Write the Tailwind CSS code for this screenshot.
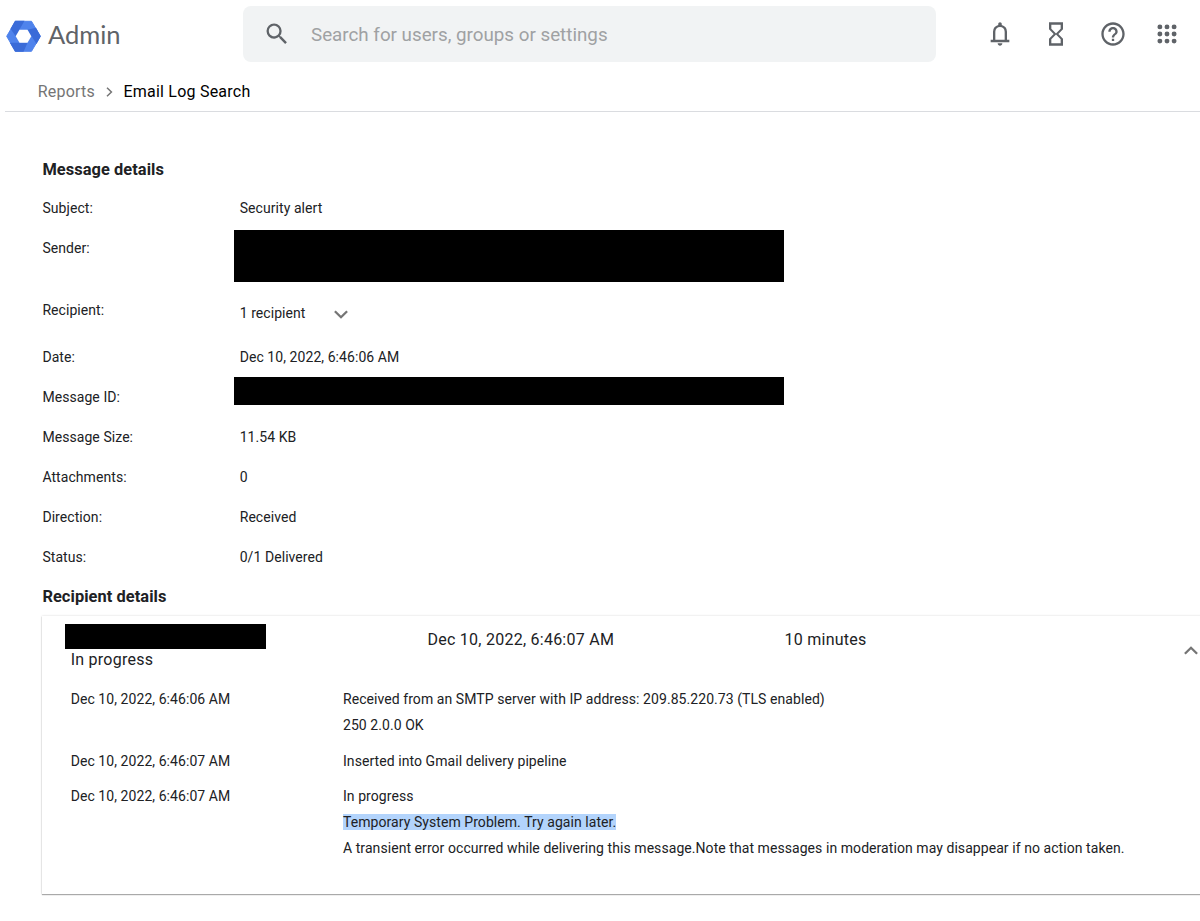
<!DOCTYPE html>
<html lang="en">
<head>
    <meta charset="UTF-8">
    <title>Email Log Search - Admin</title>
    <script src="https://cdn.jsdelivr.net/npm/@tailwindcss/browser@4"></script>
</head>
<body class="bg-white font-[Roboto,sans-serif] text-[#202124] overflow-hidden h-[921px]">
    <header class="flex items-start h-[68px] pl-1.5 pt-1.5">
        <div class="flex items-start w-[237px] pt-2.5">
            <svg class="w-[35px] h-[40px]" viewBox="0 0 35 40" fill="none">
                <path fill="#4f83ec" stroke="#4f83ec" stroke-linejoin="round" d="M9.500 5.300h16L34.300 20.300l-8.800 15h-16L.7 20.300z"/>
                <path fill="#3a6bd8" d="M9 4.800h9.500L9.700 20.300 4.500 12.800zM34.800 20.300l-4.300 7.700-9-14.200 8.500-2zM9 35.800 3.800 26.800h17.700l-4 9z"/>
                <path fill="#fff" d="M13.500 13.800h8L25.300 20.300l-3.800 6.500h-8L9.700 20.300z"/>
            </svg>
            <span class="ml-[7px] font-[Lato,sans-serif] text-[25.500px] leading-[36px] text-[#5f6368]">Admin</span>
        </div>
        <div class="flex items-center w-[693px] h-14 rounded-lg bg-[#f1f3f4] pl-5">
            <svg class="w-7 h-7" viewBox="0 0 24 24" fill="#5f6368"><path d="M15.500 14h-.79l-.28-.27A6.471 6.471 0 0 0 16 9.500 6.500 6.500 0 1 0 9.500 16c1.610 0 3.090-.59 4.230-1.570l.27.28v.79l5 4.990L20.490 19l-4.990-5zm-6 0C7.010 14 5 11.990 5 9.500S7.010 5 9.500 5 14 7.010 14 9.500 11.990 14 9.500 14z"/></svg>
            <span class="ml-5 pt-0.5 text-[18.800px] text-[#9fa1a3]">Search for users, groups or settings</span>
        </div>
        <div class="flex items-center h-14 pl-[49.500px] gap-[28.500px]">
            <svg class="w-7 h-7" viewBox="0 0 24 24" fill="#5f6368"><path d="M4 19v-2h2v-7q0-2.075 1.250-3.687Q8.500 4.700 10.500 4.200v-.7q0-.625.438-1.062Q11.375 2 12 2t1.062.438q.438.437.438 1.062v.7q2 .5 3.250 2.113Q18 7.925 18 10v7h2v2Zm8 3q-.825 0-1.412-.587Q10 20.825 10 20h4q0 .825-.588 1.413Q12.825 22 12 22Zm-4-5h8v-7q0-1.650-1.175-2.825Q13.650 6 12 6q-1.650 0-2.825 1.175Q8 8.350 8 10Z"/></svg>
            <svg class="w-7 h-7" viewBox="0 0 24 24" fill="#5f6368"><path d="M6 2v6h.01L6 8.010 10 12l-4 4 .01.01H6V22h12v-5.990h-.01L18 16l-4-4 4-3.990-.01-.01H18V2H6zm10 14.500V20H8v-3.500l4-4 4 4zm-4-5l-4-4V4h8v3.500l-4 4z"/></svg>
            <svg class="w-7 h-7" viewBox="0 0 24 24" fill="#5f6368"><path d="M11 18h2v-2h-2v2zm1-16C6.480 2 2 6.480 2 12s4.480 10 10 10 10-4.480 10-10S17.520 2 12 2zm0 18c-4.410 0-8-3.590-8-8s3.590-8 8-8 8 3.590 8 8-3.590 8-8 8zm0-14c-2.210 0-4 1.790-4 4h2c0-1.100.9-2 2-2s2 .9 2 2c0 2-3 1.750-3 5h2c0-2.250 3-2.500 3-5 0-2.210-1.790-4-4-4z"/></svg>
            <svg class="w-7 h-7 -ml-0.5" viewBox="0 0 24 24" fill="#5f6368">
                <circle cx="5.900" cy="5.900" r="2.100"/><circle cx="12" cy="5.900" r="2.100"/><circle cx="18.100" cy="5.900" r="2.100"/>
                <circle cx="5.900" cy="12" r="2.100"/><circle cx="12" cy="12" r="2.100"/><circle cx="18.100" cy="12" r="2.100"/>
                <circle cx="5.900" cy="18.100" r="2.100"/><circle cx="12" cy="18.100" r="2.100"/><circle cx="18.100" cy="18.100" r="2.100"/>
            </svg>
        </div>
    </header>

    <nav class="flex items-center h-11 ml-[5px] pl-[32.800px] pt-1 border-b border-[#dadce0] text-base">
        <span class="text-[#757575] tracking-[0.2px]">Reports</span>
        <svg class="w-[7px] h-[10px] ml-[11px] mr-[10.500px]" viewBox="0 0 7 10" fill="none" stroke="#757575" stroke-width="1.500"><path d="M1 .8 5.400 5 1 9.200"/></svg>
        <span class="text-black tracking-[0.220px]">Email Log Search</span>
    </nav>

    <main class="pl-[42px] text-sm tracking-[0.065px]">
        <h2 class="pt-[46px] pl-[0.400px] h-[76px] text-[16.400px] leading-6 font-bold">Message details</h2>
        <dl class="grid grid-cols-[192px_1fr] leading-5">
            <dt class="h-10 pt-2.5 pl-[0.400px]">Subject:</dt>
            <dd class="pt-2.5 pl-[5.700px]">Security alert</dd>
            <dt class="h-[61px] pt-2.5 pl-[0.400px]">Sender:</dt>
            <dd class="pt-0.5"><div class="w-[549.500px] h-[52px] bg-black"></div></dd>
            <dt class="h-12 pt-[11px] pl-[0.400px]">Recipient:</dt>
            <dd class="flex pt-3.5 pl-[5.700px]">1 recipient
                <svg class="w-[14px] h-[9px] ml-[28.500px] mt-[7px]" viewBox="0 0 14 9" fill="none" stroke="#757575" stroke-width="2.300"><path d="M.9 1.200 7 7.200l6.100-6"/></svg>
            </dd>
            <dt class="h-10 pt-2.5 pl-[0.400px]">Date:</dt>
            <dd class="pt-2.5 pl-[5.700px]">Dec 10, 2022, 6:46:06 AM</dd>
            <dt class="h-10 pt-2.5 pl-[0.400px]">Message ID:</dt>
            <dd><div class="w-[549.500px] h-[28px] bg-black"></div></dd>
            <dt class="h-10 pt-2.5 pl-[0.400px]">Message Size:</dt>
            <dd class="pt-2.5 pl-[5.700px]">11.54 KB</dd>
            <dt class="h-10 pt-2.5 pl-[0.400px]">Attachments:</dt>
            <dd class="pt-2.5 pl-[5.700px]">0</dd>
            <dt class="h-10 pt-2.5 pl-[0.400px]">Direction:</dt>
            <dd class="pt-2.5 pl-[5.700px]">Received</dd>
            <dt class="h-10 pt-2.5 pl-[0.400px]">Status:</dt>
            <dd class="pt-2.5 pl-[5.700px]">0/1 Delivered</dd>
        </dl>

        <h2 class="pt-2 pl-[0.400px] h-[39px] text-[16.400px] leading-6 font-bold">Recipient details</h2>
        <section class="h-[278px] -mr-2 pt-2 shadow-[0_1px_1px_rgba(0,0,0,0.300),0_0_2px_rgba(0,0,0,0.160)]">
            <div class="flex text-base leading-5 tracking-[0.250px]">
                <div class="w-[385.500px] pl-[23px]">
                    <div class="w-[201px] h-[25px] bg-black"></div>
                    <p class="pl-[5.700px] pt-px -mb-px">In progress</p>
                </div>
                <p class="w-[357px] pt-[6px]">Dec 10, 2022, 6:46:07 AM</p>
                <p class="w-[399px] pt-[6px]">10 minutes</p>
                <svg class="w-[14px] h-[9px] mt-[22px]" viewBox="0 0 14 9" fill="none" stroke="#757575" stroke-width="2.300"><path d="M.9 7.800 7 1.800l6.100 6"/></svg>
            </div>
            <div class="grid grid-cols-[272.300px_1fr] pl-[28.700px] pt-[17px] leading-[26px] gap-y-[9.500px]">
                <p>Dec 10, 2022, 6:46:06 AM</p>
                <div>
                    <p>Received from an SMTP server with IP address: 209.85.220.73 (TLS enabled)</p>
                    <p>250 2.0.0 OK</p>
                </div>
                <p>Dec 10, 2022, 6:46:07 AM</p>
                <p>Inserted into Gmail delivery pipeline</p>
                <p>Dec 10, 2022, 6:46:07 AM</p>
                <div>
                    <p>In progress</p>
                    <p><span class="bg-[#b3d4fc]">Temporary System Problem. Try again later.</span></p>
                    <p>A transient error occurred while delivering this message.Note that messages in moderation may disappear if no action taken.</p>
                </div>
            </div>
        </section>
    </main>
</body>
</html>
